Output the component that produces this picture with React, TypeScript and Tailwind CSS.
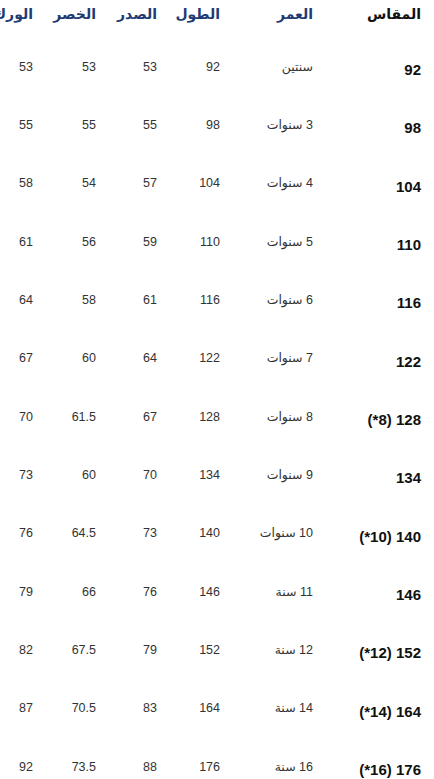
import React from "react";

const rows: [string, string, string, string, string, string][] = [
  ["92", "سنتين", "92", "53", "53", "53"],
  ["98", "3 سنوات", "98", "55", "55", "55"],
  ["104", "4 سنوات", "104", "57", "54", "58"],
  ["110", "5 سنوات", "110", "59", "56", "61"],
  ["116", "6 سنوات", "116", "61", "58", "64"],
  ["122", "7 سنوات", "122", "64", "60", "67"],
  ["128 (8*)", "8 سنوات", "128", "67", "61.5", "70"],
  ["134", "9 سنوات", "134", "70", "60", "73"],
  ["140 (10*)", "10 سنوات", "140", "73", "64.5", "76"],
  ["146", "11 سنة", "146", "76", "66", "79"],
  ["152 (12*)", "12 سنة", "152", "79", "67.5", "82"],
  ["164 (14*)", "14 سنة", "164", "83", "70.5", "87"],
  ["176 (16*)", "16 سنة", "176", "88", "73.5", "92"],
];

const headers = ["المقاس", "العمر", "الطول", "الصدر", "الخصر", "الورك"];

export default function App() {
  return (
    <div
      className="w-[434px] h-[779px] overflow-hidden bg-white"
      style={{ fontFamily: '"Liberation Sans", "DejaVu Sans", sans-serif' }}
    >
      <div dir="rtl" className="pr-[13px] w-[480px] ml-[-46px]">
        <div className="grid grid-cols-[108px_93px_63px_61px_63px_79px] h-[39px] items-start pt-[3px]">
          {headers.map((h, i) => (
            <div
              key={i}
              className={`text-right text-[14px] leading-[22px] font-bold whitespace-nowrap ${
                i === 0 ? "text-[#111111]" : "text-[#1f3b73]"
              }`}
            >
              {h}
            </div>
          ))}
        </div>
        {rows.map((r, ri) => (
          <div
            key={ri}
            className="grid grid-cols-[108px_93px_63px_61px_63px_79px] h-[58.33px] items-center"
          >
            <div className="text-right text-[15px] font-bold text-[#111111] whitespace-nowrap pt-[4px]">
              {r[0]}
            </div>
            {r.slice(1).map((c, ci) => (
              <div
                key={ci}
                className="text-right text-[12.5px] text-[#333333] whitespace-nowrap pb-[2px]"
              >
                {c}
              </div>
            ))}
          </div>
        ))}
      </div>
    </div>
  );
}
